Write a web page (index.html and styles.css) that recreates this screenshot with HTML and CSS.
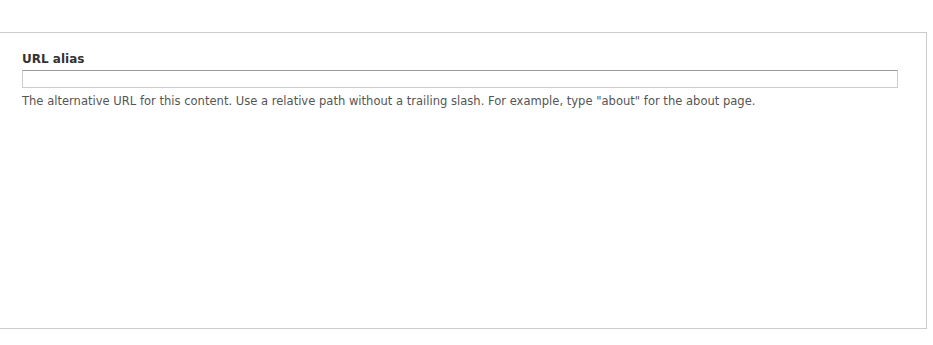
FILE: index.html
```html
<!DOCTYPE html>
<html>
<head>
<meta charset="utf-8">
<link rel="stylesheet" href="styles.css">
</head>
<body>
<div class="panel">
  <div class="form-item">
    <label class="label" for="alias">URL alias</label>
    <input class="text" id="alias" type="text">
    <div class="description">The alternative URL for this content. Use a relative path without a trailing slash. For example, type "about" for the about page.</div>
  </div>
</div>
</body>
</html>
```
FILE: styles.css
```css
html, body {
  margin: 0;
  padding: 0;
  background: #fff;
}
body {
  font-family: "DejaVu Sans", Verdana, sans-serif;
  color: #333;
}
.panel {
  margin-top: 32px;
  width: 926px;
  height: 295px;
  border: 1px solid #ccc;
  border-left: none;
  box-sizing: content-box;
}
.form-item {
  padding: 19px 0 0 22px;
}
.label {
  display: block;
  font-size: 12px;
  font-weight: bold;
  color: #333;
  line-height: 15px;
  margin-bottom: 3px;
}
.text {
  display: block;
  box-sizing: border-box;
  width: 876px;
  height: 18px;
  margin: 0;
  padding: 0 4px;
  border: 1px solid #ccc;
  border-top-color: #999;
  background: #fff;
  outline: none;
}
.description {
  font-size: 11.55px;
  color: #555;
  line-height: 15px;
  margin-top: 6px;
}
```
